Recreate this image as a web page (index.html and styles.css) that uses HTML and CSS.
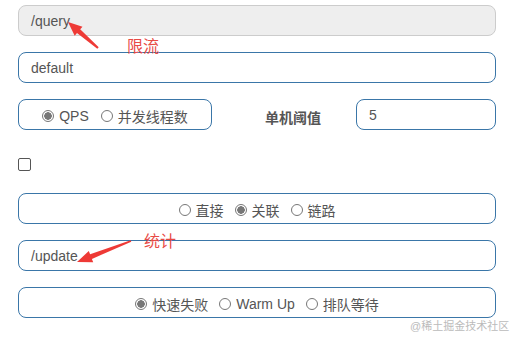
FILE: index.html
```html
<!DOCTYPE html>
<html>
<head>
<meta charset="utf-8">
<link rel="stylesheet" href="styles.css">
</head>
<body>
<div class="form">
  <div class="field disabled">/query</div>
  <div class="field">default</div>
  <div class="row">
    <div class="box small">
      <label class="opt"><span class="radio on"></span>QPS</label>
      <label class="opt"><span class="radio"></span>并发线程数</label>
    </div>
    <div class="lbl">单机阈值</div>
    <div class="field num">5</div>
  </div>
  <div class="checkrow"><span class="check"></span></div>
  <div class="box">
    <label class="opt"><span class="radio"></span>直接</label>
    <label class="opt"><span class="radio on"></span>关联</label>
    <label class="opt"><span class="radio"></span>链路</label>
  </div>
  <div class="field">/update</div>
  <div class="box">
    <label class="opt"><span class="radio on"></span>快速失败</label>
    <label class="opt"><span class="radio"></span>Warm Up</label>
    <label class="opt"><span class="radio"></span>排队等待</label>
  </div>
</div>
<svg class="arrows" width="519" height="340" viewBox="0 0 519 340">
  <path d="M98.7 47.2 L80.2 29.3 L82.5 26.7 L68 22 L74.7 35.7 L77 33.1 L97.3 48.8 Z" fill="#ee3a36"/>
  <path d="M130.7 240.3 L90.1 254.3 L88.8 251 L77 262 L93.2 262.2 L91.9 258.9 L131.3 241.7 Z" fill="#ee3a36"/>
</svg>
<div class="note n1">限流</div>
<div class="note n2">统计</div>
<div class="mark">@稀土掘金技术社区</div>
</body>
</html>
```
FILE: styles.css
```css
* { box-sizing: border-box; }
body {
  margin: 0;
  width: 519px;
  height: 340px;
  background: #fff;
  font-family: "Liberation Sans", "Noto Sans CJK SC", sans-serif;
  font-size: 14px;
  color: #555;
  position: relative;
  overflow: hidden;
}
.form {
  display: flex;
  flex-direction: column;
  gap: 16px;
  padding: 5px 0 0 18px;
  width: 496px;
}
.field {
  height: 31px;
  border: 1px solid #3a76a8;
  border-radius: 8px;
  padding: 0 12px;
  display: flex;
  align-items: center;
  color: #555;
}
.field.disabled {
  background: #eee;
  border-color: #ccc;
}
.row {
  display: flex;
  align-items: center;
}
.box {
  height: 31px;
  border: 1px solid #3a76a8;
  border-radius: 8px;
  display: flex;
  align-items: center;
  justify-content: center;
  gap: 11px;
  padding-top: 2px;
}
.box.small {
  width: 194px;
  gap: 12px;
}
.lbl {
  font-weight: bold;
  margin-left: 53px;
  width: 91px;
  padding-top: 4px;
  color: #555;
}
.field.num {
  width: 140px;
}
.opt {
  display: flex;
  align-items: center;
  gap: 5px;
}
.radio {
  width: 12px;
  height: 12px;
  border: 1px solid #777;
  border-radius: 50%;
  background: #fff;
}
.radio.on {
  background: radial-gradient(circle, #777 0 3.5px, #fff 4px);
}
.checkrow {
  height: 13px;
  margin: 12px 0 6px;
}
.check {
  display: block;
  width: 13px;
  height: 13px;
  border: 1px solid #555;
  border-radius: 2px;
}
.arrows {
  position: absolute;
  left: 0;
  top: 0;
}
.note {
  position: absolute;
  color: #e84a45;
  font-size: 16px;
  line-height: 16px;
}
.n1 { left: 127px; top: 39px; }
.n2 { left: 144px; top: 234px; }
.mark {
  position: absolute;
  left: 410px;
  top: 317px;
  font-size: 11px;
  color: #bbb;
}
```
